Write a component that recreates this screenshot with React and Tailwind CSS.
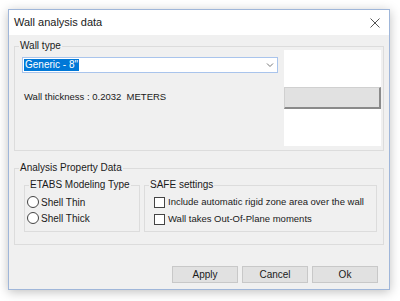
import React from "react";

const font = { fontFamily: '"Liberation Sans", Arial, sans-serif' };

function Group({ label, className, children, legendClass = "" }) {
  return (
    <fieldset className={`border border-[#dcdcdc] ${className}`}>
      <legend className={`px-[1px] ml-[4px] text-[10px] leading-[12px] text-[#1a1a1a] whitespace-nowrap ${legendClass}`}>{label}</legend>
      {children}
    </fieldset>
  );
}

function Radio({ label }) {
  return (
    <div className="flex items-center gap-[2px] h-[16px]">
      <span className="w-[12px] h-[12px] rounded-full border border-[#444] bg-white" />
      <span className="text-[10px] text-[#1a1a1a]">{label}</span>
    </div>
  );
}

function Check({ label }) {
  return (
    <div className="flex items-center gap-[3px] h-[17px]">
      <span className="w-[11px] h-[11px] border border-[#444] bg-white" />
      <span className="text-[9.5px] text-[#1a1a1a] whitespace-nowrap">{label}</span>
    </div>
  );
}

function Btn({ label }) {
  return (
    <div className="w-[66px] h-[17px] border border-[#c8c8c8] bg-[#e1e1e1] flex items-center justify-center text-[10px] text-[#1a1a1a]">
      {label}
    </div>
  );
}

export default function App() {
  return (
    <div className="w-[400px] h-[301px] bg-white pt-[9px] pl-[8px]" style={font}>
      <div className="w-[382px] h-[281px] border border-[#9fb6d9] bg-[#f0f0f0] shadow-[0_2px_10px_rgba(0,0,0,0.25)] flex flex-col">
        <div className="h-[25px] bg-white flex items-center justify-between pl-[5px] pr-[9px]">
          <span className="text-[11px] text-[#1a1a1a]">Wall analysis data</span>
          <svg width="10" height="10" viewBox="0 0 10 10">
            <path d="M0.5 0.5L9.5 9.5M9.5 0.5L0.5 9.5" stroke="#555" strokeWidth="1" />
          </svg>
        </div>
        <div className="flex-1 flex flex-col px-[5px]">
          <Group label="Wall type" className="mt-[5px] h-[111px] flex">
            <div className="flex w-full pl-[7px] pr-[2px] pt-[5px]">
              <div className="flex-1 flex flex-col">
                <div className="w-[256px] h-[16px] border border-[#a9c4ec] bg-white flex items-center justify-between pl-[1px] pr-[3px]">
                  <span className="bg-[#0078d7] text-white text-[10px] leading-[12px] px-[1px]">Generic - 8"</span>
                  <svg width="8" height="6" viewBox="0 0 8 6">
                    <path d="M1 1.5L4 4.5L7 1.5" stroke="#777" strokeWidth="1" fill="none" />
                  </svg>
                </div>
                <div className="mt-[17px] pl-[2px] text-[9.5px] text-[#1a1a1a] whitespace-pre">Wall thickness : 0.2032  METERS</div>
              </div>
              <div className="w-[97px] h-[96px] -mt-[7px] bg-white flex flex-col justify-center">
                <div className="h-[22px] bg-[#e1e1e1] border border-[#d0d0d0] border-r-[#8a8a8a] border-b-[#8a8a8a] border-r-2 border-b-2" />
              </div>
            </div>
          </Group>
          <Group label="Analysis Property Data" className="mt-[11px] h-[83px]">
            <div className="flex gap-[4px] pl-[9px] pr-[6px] pt-[5px]">
              <Group label="ETABS Modeling Type" className="w-[116px] h-[53px]" legendClass="ml-[3px]">
                <div className="flex flex-col pl-[2px] pt-[3px]">
                  <Radio label="Shell Thin" />
                  <Radio label="Shell Thick" />
                </div>
              </Group>
              <Group label="SAFE settings" className="flex-1 h-[53px]" legendClass="ml-0">
                <div className="flex flex-col pl-[9px] pt-[3px]">
                  <Check label="Include automatic rigid zone area over the wall" />
                  <Check label="Wall takes Out-Of-Plane moments" />
                </div>
              </Group>
            </div>
          </Group>
          <div className="flex justify-end gap-[4px] mt-[21px] pr-[6px]">
            <Btn label="Apply" />
            <Btn label="Cancel" />
            <Btn label="Ok" />
          </div>
        </div>
      </div>
    </div>
  );
}
